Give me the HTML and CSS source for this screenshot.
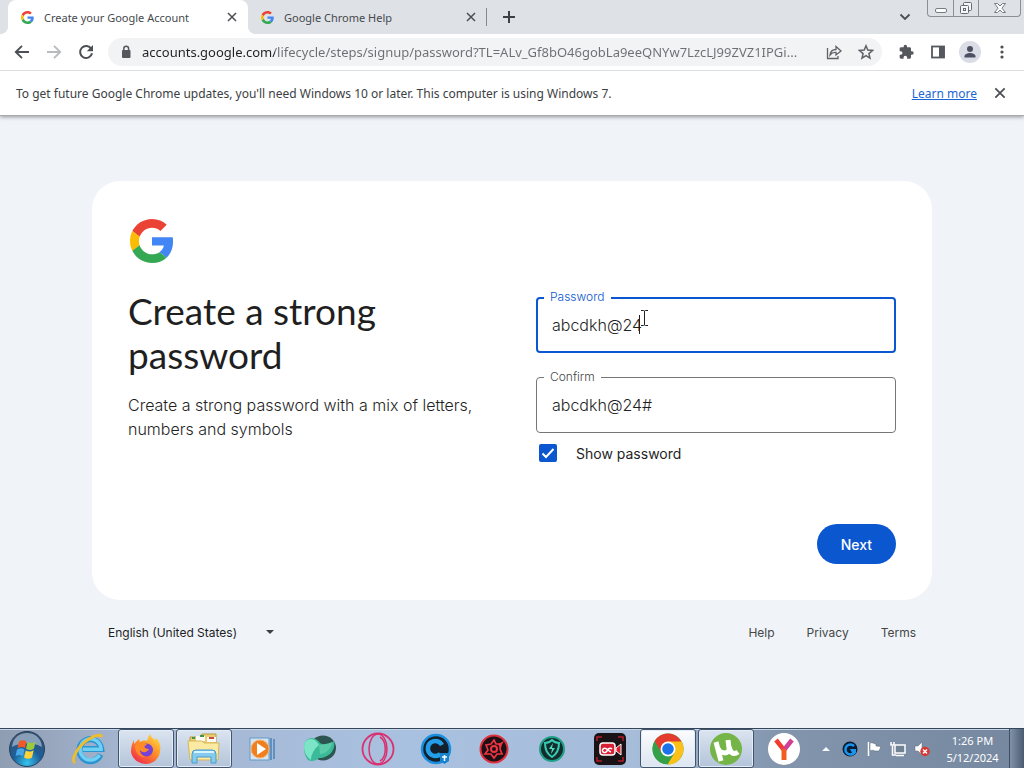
FILE: index.html
```html
<!DOCTYPE html>
<html lang="en">
<head>
    <meta charset="UTF-8">
    <meta name="viewport" content="width=device-width, initial-scale=1.0">
    <title>Create your Google Account</title>
    <link rel="stylesheet" href="styles.css">
</head>
<body>

    <svg class="defs" aria-hidden="true">
        <symbol id="google" viewBox="0 0 48 48">
            <path fill="#ea4335" d="M24 9.5c3.54 0 6.71 1.22 9.21 3.6l6.85-6.85C35.9 2.38 30.47 0 24 0 14.62 0 6.51 5.38 2.56 13.22l7.98 6.19C12.43 13.72 17.74 9.5 24 9.5z"/>
            <path fill="#4285f4" d="M46.98 24.55c0-1.57-.15-3.09-.38-4.55H24v9.02h12.94c-.58 2.96-2.26 5.48-4.78 7.18l7.73 6c4.51-4.18 7.09-10.36 7.09-17.65z"/>
            <path fill="#fbbc05" d="M10.53 28.59c-.48-1.45-.76-2.99-.76-4.59s.27-3.14.76-4.59l-7.98-6.19C.92 16.46 0 20.12 0 24c0 3.88.92 7.54 2.56 10.78l7.97-6.19z"/>
            <path fill="#34a853" d="M24 48c6.48 0 11.93-2.13 15.89-5.81l-7.73-6c-2.15 1.45-4.92 2.3-8.16 2.3-6.26 0-11.57-4.22-13.47-9.91l-7.98 6.19C6.51 42.62 14.62 48 24 48z"/>
        </symbol>
        <symbol id="close" viewBox="0 0 12 12">
            <path d="M2 2l8 8M10 2l-8 8" fill="none" stroke="currentColor" stroke-width="1.5"/>
        </symbol>
    </svg>

    <!-- browser -->
    <header class="browser">
        <div class="tabs">
            <div class="tab active">
                <svg class="favicon"><use href="#google"/></svg>
                <span class="tab-title">Create your Google Account</span>
                <button class="tab-close" aria-label="Close tab"><svg width="12" height="12"><use href="#close"/></svg></button>
            </div>
            <div class="tab">
                <svg class="favicon"><use href="#google"/></svg>
                <span class="tab-title">Google Chrome Help</span>
                <button class="tab-close" aria-label="Close tab"><svg width="12" height="12"><use href="#close"/></svg></button>
            </div>
            <span class="divider"></span>
            <button class="new-tab" aria-label="New tab">
                <svg width="14" height="14" viewBox="0 0 14 14"><path d="M7 1v12M1 7h12" stroke="#3c4043" stroke-width="2"/></svg>
            </button>
            <button class="tab-search" aria-label="Search tabs">
                <svg width="12" height="8" viewBox="0 0 12 8"><path d="M1.5 1.5L6 6l4.5-4.5" fill="none" stroke="#4a4d51" stroke-width="1.8"/></svg>
            </button>
            <div class="window-buttons">
                <button aria-label="Minimize"><svg width="14" height="14" viewBox="0 0 14 14"><rect x="1.5" y="7.5" width="11" height="4" rx="1.5" fill="#fff" stroke="#777c83"/></svg></button>
                <button aria-label="Restore"><svg width="14" height="14" viewBox="0 0 14 14" fill="#f5f6f8" stroke="#666b72"><rect x="4.5" y="1.5" width="8" height="8" rx="1"/><rect x="1.5" y="4.5" width="8" height="8" rx="1"/><rect x="4.5" y="7.5" width="2" height="2"/></svg></button>
                <button class="wide" aria-label="Close"><svg width="14" height="14" viewBox="0 0 14 14"><path d="M1.5 2.5h3L7 5l2.5-2.5h3L9 7.2l3.5 4.3h-3L7 9l-2.5 2.5h-3L5 7.2z" fill="#fff" stroke="#777c83"/></svg></button>
            </div>
        </div>

        <div class="toolbar">
            <button aria-label="Back"><svg width="16" height="16" viewBox="0 0 16 16"><path d="M15 8H2.500M8 1.800L1.800 8 8 14.200" fill="none" stroke="#4c4f53" stroke-width="1.9"/></svg></button>
            <button aria-label="Forward"><svg width="16" height="16" viewBox="0 0 16 16"><path d="M1 8h12.500M8 1.800L14.200 8 8 14.200" fill="none" stroke="#b9bbbe" stroke-width="1.9"/></svg></button>
            <button aria-label="Reload"><svg width="16" height="16" viewBox="0 0 16 16"><path d="M13.300 5A6 6 0 1 0 14 9.200" fill="none" stroke="#4c4f53" stroke-width="2"/><path d="M15 1v6.200H8.800z" fill="#4c4f53"/></svg></button>
            <div class="omnibox">
                <svg width="12" height="14" viewBox="0 0 12 14"><rect x="2" y="5" width="8.500" height="8" rx="1" fill="#55585c"/><path d="M3.800 6V3.600a2.400 2.400 0 0 1 4.800 0V6" fill="none" stroke="#55585c" stroke-width="1.5"/></svg>
                <input class="url" type="text" aria-label="Address bar" value="accounts.google.com/lifecycle/steps/signup/password?TL=ALv_Gf8bO46gobLa9eeQNYw7LzcLJ99ZVZ1IPGi...">
                <button aria-label="Share"><svg width="16" height="16" viewBox="0 0 16 16" fill="none" stroke="#5f6368" stroke-width="1.3"><path d="M1.500 4v10.500H12V12"/><path d="M4 11c.5-4 3-5.500 6-5.500V2.500L15 7l-5 4V8.500C7.500 8.300 5.500 9 4 11z"/></svg></button>
                <button aria-label="Bookmark"><svg width="16" height="16" viewBox="0 0 16 16"><path d="M8 1.800l1.800 4.300 4.700.4-3.600 3.100 1.100 4.600L8 11.700l-4 2.500 1.100-4.600L1.500 6.500l4.700-.4z" fill="none" stroke="#5f6368" stroke-width="1.5"/></svg></button>
            </div>
            <button aria-label="Extensions"><svg width="16" height="16" viewBox="0 0 24 24"><path fill="#55585c" d="M21 11h-1.500V7c0-1.100-.9-2-2-2h-4V3.500a2.500 2.500 0 0 0-5 0V5h-4c-1.100 0-2 .9-2 2v3.800H4a2.700 2.700 0 0 1 0 5.400H2.500V20c0 1.100.9 2 2 2h3.800v-1.500a2.700 2.700 0 0 1 5.400 0V22h3.800c1.100 0 2-.9 2-2v-4H21a2.500 2.500 0 0 0 0-5z"/></svg></button>
            <button aria-label="Side panel"><svg width="16" height="16" viewBox="0 0 16 16"><rect x="2" y="2.500" width="12" height="11" fill="#fff" stroke="#55585c" stroke-width="1.8"/><path d="M9 2h5.500v12H9z" fill="#55585c"/></svg></button>
            <button class="avatar" aria-label="Profile"><svg width="16" height="16" viewBox="0 0 16 16" fill="#4b5163"><circle cx="8" cy="5" r="3"/><path d="M2.500 13.500v-1.300C2.500 10.300 5.500 9 8 9s5.500 1.300 5.500 3.200v1.300z"/></svg></button>
            <button aria-label="Menu"><svg width="16" height="16" viewBox="0 0 16 16" fill="#4c4f53"><circle cx="8" cy="3" r="1.600"/><circle cx="8" cy="8" r="1.600"/><circle cx="8" cy="13" r="1.600"/></svg></button>
        </div>

        <div class="infobar">
            <span>To get future Google Chrome updates, you'll need Windows 10 or later. This computer is using Windows 7.</span>
            <a href="#">Learn more</a>
            <button aria-label="Dismiss"><svg width="14" height="14"><use href="#close"/></svg></button>
        </div>
    </header>

    <!-- sign up page -->
    <main class="page">
        <form class="card">
            <svg class="logo" role="img" aria-label="Google"><use href="#google"/></svg>
            <div class="columns">
                <div class="intro">
                    <h1>Create a strong password</h1>
                    <p>Create a strong password with a mix of letters, numbers and symbols</p>
                </div>
                <div class="fields">
                    <div class="field focused">
                        <input type="text" id="password" value="abcdkh@24">
                        <label for="password">Password</label>
                        <svg class="cursor" width="14" height="26" viewBox="0 0 14 26"><path d="M2.500 6v19" stroke="#202124"/><path d="M4 1.500h2.500l1 .5 1-.5H11M4 16.500h2.500l1-.5 1 .5H11M7.500 2v14" fill="none" stroke="#202124"/></svg>
                    </div>
                    <div class="field">
                        <input type="text" id="confirm" value="abcdkh@24#">
                        <label for="confirm">Confirm</label>
                    </div>
                    <div class="show">
                        <span class="check">
                            <input type="checkbox" id="show" checked>
                            <svg width="18" height="18" viewBox="0 0 18 18"><path d="M3.500 9.500l3.500 3.500 7.500-8" fill="none" stroke="#fff" stroke-width="2"/></svg>
                        </span>
                        <label for="show">Show password</label>
                    </div>
                    <button class="next" type="button">Next</button>
                </div>
            </div>
        </form>
        <footer class="footer">
            <div class="language">
                <select aria-label="Language"><option>English (United States)</option></select>
                <svg width="8" height="4" viewBox="0 0 8 4"><path d="M0 0h8L4 4z" fill="#3c4043"/></svg>
            </div>
            <nav>
                <a href="#">Help</a>
                <a href="#">Privacy</a>
                <a href="#">Terms</a>
            </nav>
        </footer>
    </main>

    <!-- windows taskbar -->
    <div class="taskbar">
        <button class="start" aria-label="Start">
            <svg width="38" height="38" viewBox="0 0 38 38">
                <defs><radialGradient id="orb" cx=".5" cy=".9" r=".8"><stop offset="0" stop-color="#35c4ee"/><stop offset=".5" stop-color="#1c5f9a"/><stop offset="1" stop-color="#345373"/></radialGradient></defs>
                <circle cx="19" cy="19" r="17.500" fill="url(#orb)" stroke="#24405c"/>
                <path d="M4 17C5 7 12 3 19 3s14 4 15 14c-9-5-21-5-30 0z" fill="#cfdceb" opacity=".55"/>
                <path d="M11 11.500c3-2 5.500-1.500 7.500 0L17 18c-2.500-1.500-4.500-1.500-7.500 0z" fill="#f0582a"/>
                <path d="M19.500 12c3 1.500 5.500 1.500 8-.5L26 18.500c-2.500 2-5.500 2-8 .3z" fill="#9ac93c"/>
                <path d="M9 19.500c3-1.800 5.500-1.500 7.500 0L15 26c-2.500-1.500-5-1.500-7.500 0z" fill="#49a7e8"/>
                <path d="M17.700 20.500c2.500 1.500 5.500 1.500 8-.5L24 27.500c-2.500 1.800-5.500 1.500-8 0z" fill="#ffd23a"/>
            </svg>
        </button>
        <div class="apps">
            <button aria-label="Internet Explorer">
                <svg width="34" height="34" viewBox="0 0 34 34"><path d="M29.500 22.500a11 11 0 1 1 .8-5.500H12" fill="none" stroke="#2c94cf" stroke-width="6"/><path d="M28.500 23a10.500 10.500 0 1 1 1.600-5.800H12" fill="none" stroke="#6fd0f5" stroke-width="3.500"/><path d="M4 31C-1 27 8 13 18 7c6-4 12-5 13-2" fill="none" stroke="#eebc2c" stroke-width="2.800"/></svg>
            </button>
            <button class="open" aria-label="Firefox">
                <svg width="32" height="32" viewBox="0 0 32 32">
                    <defs><linearGradient id="fox" x1=".9" y1="0" x2=".2" y2="1"><stop offset="0" stop-color="#ffe14a"/><stop offset=".45" stop-color="#ff9226"/><stop offset="1" stop-color="#f0264f"/></linearGradient></defs>
                    <path d="M20 1c1 3 3 4 5 6l1-2c4 4 5 8 4 14-1 7-7 12-14 12S2 26 1 19c0-5 1-9 3-12v4l5-5 1 3c2-1 4-2 7-1 1-2 1-5 3-7z" fill="url(#fox)"/>
                    <circle cx="16.500" cy="17" r="6.500" fill="#7541d9"/><path d="M5 13c4-5 9-5 12-1-4 0-3 4 2 4-2 4-7 4-9 1-1 3 2 6 6 7-6 1-11-4-11-11z" fill="#ff8b27"/>
                </svg>
            </button>
            <button class="open" aria-label="Windows Explorer">
                <svg width="34" height="34" viewBox="0 0 34 34"><path d="M3 5h10l2-3h14v22H3z" fill="#e9cd70" stroke="#bd9b3e"/><path d="M9 4h9v5H9zM20 5h9v5h-9z" fill="#fbfbf4"/><path d="M5 5h3v2H5zM13 3h4v2h-4z" fill="#3e9650"/><path d="M22 5h5v2h-5z" fill="#c74a41"/><path d="M1 9h14l2 2h15l-1 17H3z" fill="#faeaa2" stroke="#d5b85d"/><path d="M5 31V22q0-4 4-4h16q4 0 4 4v9h-5v-6H10v6z" fill="#85cbed" stroke="#459bce"/><path d="M7 20h20" stroke="#d9f4ff" stroke-width="2"/></svg>
            </button>
            <button aria-label="Media Player">
                <svg width="30" height="30" viewBox="0 0 30 30"><rect x="3" y="4" width="19" height="22" fill="#d5e4f3" stroke="#6599c5"/><path d="M24 4v22M27 5v20" stroke="#4b82b5" stroke-width="1.5"/><circle cx="13" cy="15" r="9" fill="#f07f20" stroke="#f9b36f"/><path d="M10 9l9 6-9 6z" fill="#fff"/></svg>
            </button>
            <button aria-label="Driver Booster">
                <svg width="34" height="30" viewBox="0 0 34 30"><ellipse cx="20" cy="14" rx="13" ry="12.500" fill="#2c554f"/><path d="M2 8C7 1 14 4 17 9c5 3 9 2 14-2 2 9-5 17-15 17-3 3-8 4-11 2C1 21 0 13 2 8z" fill="#3aba98"/><path d="M2 8c6-6 11-2 14 3-4 3-8 9-8 15C1 21 0 13 2 8z" fill="#7de5c7"/><path d="M16 11c4-1 9-1 13-3 0 6-6 12-12 12z" fill="#5acba8"/></svg>
            </button>
            <button aria-label="Opera GX">
                <svg width="34" height="34" viewBox="0 0 34 34" fill="none" stroke="#dc2f70"><circle cx="17" cy="17" r="15.500" stroke-width="1.800"/><ellipse cx="17" cy="17" rx="9" ry="15" stroke-width="1.5"/><path d="M19 5c7 4 7 20 0 24" stroke-width="1.5"/></svg>
            </button>
            <button aria-label="CCleaner">
                <svg width="32" height="32" viewBox="0 0 32 32"><circle cx="16" cy="16" r="14" fill="#14202c" stroke="#1a8fe0" stroke-width="2.500"/><path d="M22 12a7.500 7.500 0 1 0-1.500 9" fill="none" stroke="#249ee9" stroke-width="4.500"/><path d="M20 20h9v8l-4.500 3L20 28z" fill="#1683cf"/><path d="M24.500 22v6M22 24h5" stroke="#fff" stroke-width="1.5"/></svg>
            </button>
            <button aria-label="Game Booster">
                <svg width="32" height="32" viewBox="0 0 32 32" fill="none"><circle cx="16" cy="16" r="13.500" fill="#1d1116" stroke="#e0303c" stroke-width="2"/><path d="M8 12l5-1 3-4 2 4 5 0-1 5 2 5-5 0-3 4-3-4-6 0 3-4z" stroke="#ef3442" stroke-width="1.700"/><circle cx="16" cy="16" r="3" stroke="#ef3442" stroke-width="2"/><path d="M20 11l6-3-4 7z" fill="#ef3442"/></svg>
            </button>
            <button aria-label="Malware Fighter">
                <svg width="30" height="30" viewBox="0 0 30 30" fill="none"><circle cx="15" cy="15" r="12" fill="#152c2e" stroke="#1fa18a" stroke-width="2"/><path d="M8 9c4 0 5-1 7-3 2 2 4 3 7 3 0 7-2 11-7 14-5-3-7-7-7-14z" stroke="#35cdb0" stroke-width="2"/><path d="M16 9l-4 6h3l-1 5 4-6h-3z" fill="#4be0c2"/></svg>
            </button>
            <button aria-label="Screen Recorder">
                <svg width="32" height="32" viewBox="0 0 32 32" fill="none"><rect width="32" height="32" rx="5" fill="#1a1315"/><path d="M3 8V4h5M24 4h5v4M29 24v4h-5M8 28H3v-4" stroke="#b41d2b" stroke-width="1.5"/><rect x="6" y="10" width="15" height="12" rx="3" fill="#d91f34" stroke="#fff" stroke-width="1.5"/><path d="M22 15l5-4v11l-5-4z" fill="#d91f34" stroke="#fff"/><path d="M17 19c-3-1-5-6-8-3-2 3 2 5 4 2 1-2 3-4 5-2" stroke="#fff" stroke-width="1.5"/></svg>
            </button>
            <button class="open current" aria-label="Google Chrome">
                <svg width="32" height="32" viewBox="0 0 32 32"><circle cx="16" cy="16" r="15.500" fill="#34a048"/><path d="M16 16L2.600 8A15.500 15.500 0 0 1 29.400 8.500z" fill="#e33b2e"/><path d="M16 8.500h13.600A15.500 15.500 0 0 1 15.500 31.500L22.500 20z" fill="#fbc116"/><path d="M2.600 8.200L9.500 20l6-11z" fill="#e33b2e"/><path d="M2.600 8.200L9.500 19.800 16 24l-2 7.300A15.500 15.500 0 0 1 2.600 8.200z" fill="#34a048"/><circle cx="16" cy="16" r="7.500" fill="#fff"/><circle cx="16" cy="16" r="5.800" fill="#1a73e8"/></svg>
            </button>
            <button class="open" aria-label="uTorrent">
                <svg width="34" height="34" viewBox="0 0 34 34" fill="none"><circle cx="17" cy="17" r="16" fill="#75b447"/><path d="M7 10l5 19" stroke="#fff" stroke-width="5"/><path d="M9 16c1 6 12 7 11 0L19 8M20 15c2 7 5 8 9 5" stroke="#fff" stroke-width="5"/></svg>
            </button>
            <button aria-label="Yandex Browser">
                <svg width="32" height="32" viewBox="0 0 32 32" fill="none"><circle cx="16" cy="16" r="16" fill="#fff"/><path d="M8 7l8 10v10" stroke="#f23b2d" stroke-width="4.500"/><path d="M16 17l8-10" stroke="#cf3f95" stroke-width="4.500"/><path d="M16 16v11" stroke="#f25c1d" stroke-width="4.500"/></svg>
            </button>
        </div>
        <div class="tray">
            <svg width="8" height="4" viewBox="0 0 8 4"><path d="M0 4h8L4 0z" fill="#f4f7fb"/></svg>
            <svg width="16" height="16" viewBox="0 0 16 16" fill="none"><circle cx="8" cy="8" r="7.500" fill="#0a1c33"/><path d="M12 5a5 5 0 1 0 0 7" stroke="#1997ee" stroke-width="2.500"/><path d="M8 8h6v4l-3 2" fill="#1997ee"/></svg>
            <svg width="16" height="16" viewBox="0 0 16 16"><path d="M2.500 1v14" stroke="#fff" stroke-width="1.5"/><path d="M4 2c3-1 4 1 6 1v2l5 .5-2 4.500H9c-2-1-3-1-5 0z" fill="#fff" stroke="#53616f" stroke-width=".5"/></svg>
            <svg width="16" height="16" viewBox="0 0 16 16" fill="none"><rect x="5" y="4" width="10" height="8" fill="#718295" stroke="#fff" stroke-width="1.5"/><path d="M6 14.500h8M2.500 5v9H6M1 1v3h3V1" stroke="#fff" stroke-width="1.5"/></svg>
            <svg width="16" height="16" viewBox="0 0 16 16" fill="none"><path d="M1 5h3l4-4v13l-4-4H1z" fill="#fff" stroke="#5e6b78" stroke-width=".5"/><circle cx="11" cy="10.500" r="4.700" fill="#d93632"/><path d="M9 8.500l4 4M13 8.500l-4 4" stroke="#fff" stroke-width="1.5"/></svg>
        </div>
        <div class="clock">
            <span>1:26 PM</span>
            <span>5/12/2024</span>
        </div>
        <button class="show-desktop" aria-label="Show desktop"></button>
    </div>

</body>
</html>
```
FILE: styles.css
```css
* {
    box-sizing: border-box;
}
body {
    display: flex;
    flex-direction: column;
    min-height: 100vh;
    margin: 0;
    background-color: #f0f4f9;
    font-family: "Noto Sans", "Open Sans", sans-serif;
    color: #1f1f1f;
}
button {
    display: flex;
    align-items: center;
    justify-content: center;
    padding: 0;
    border: none;
    background: none;
    font-family: inherit;
    cursor: pointer;
}
svg {
    display: block;
    flex-shrink: 0;
}
.defs {
    position: absolute;
    width: 0;
    height: 0;
}

/* browser */
.browser {
    background-color: white;
    border-bottom: 1px solid #a9abaf;
    box-shadow: 0 1px 4px rgba(0, 0, 0, 0.4);
}
.tabs {
    display: flex;
    align-items: center;
    height: 34px;
    padding: 0 3px 0 8px;
    background-color: #dee1e6;
}
.tab {
    display: flex;
    align-items: center;
    gap: 10px;
    width: 238px;
    height: 34px;
    padding: 0 9px 0 13px;
    font-size: 11px;
    color: #45494d;
}
.tab.active {
    position: relative;
    width: 240px;
    padding-right: 10px;
    border-radius: 8px 8px 0 0;
    background-color: white;
}
/* curved feet of the open tab */
.tab.active::before,
.tab.active::after {
    content: "";
    position: absolute;
    bottom: 0;
    width: 8px;
    height: 8px;
}
.tab.active::before {
    right: 100%;
    background: radial-gradient(circle at 0 0, transparent 8px, white 8px);
}
.tab.active::after {
    left: 100%;
    background: radial-gradient(circle at 100% 0, transparent 8px, white 8px);
}
.favicon {
    width: 13px;
    height: 13px;
}
.tab-title {
    flex: 1;
    white-space: nowrap;
    overflow: hidden;
}
.tab-close {
    color: #4a4d51;
}
.divider {
    width: 1px;
    height: 18px;
    background-color: #85898e;
}
.new-tab {
    width: 44px;
}
.tab-search {
    width: 28px;
    margin-left: auto;
}
.window-buttons {
    display: flex;
    align-self: flex-start;
    height: 17px;
    margin-left: 8px;
    border: 1px solid #8a8f96;
    border-top: none;
    border-radius: 0 0 4px 4px;
}
.window-buttons button {
    width: 25px;
}
.window-buttons button + button {
    border-left: 1px solid #8a8f96;
}
.window-buttons .wide {
    width: 42px;
}
.toolbar {
    display: flex;
    align-items: center;
    height: 37px;
    padding: 0 6px;
    border-bottom: 1px solid #dcdee1;
}
.toolbar button {
    width: 32px;
    height: 28px;
}
.omnibox {
    display: flex;
    align-items: center;
    flex: 1;
    height: 28px;
    margin: 0 8px 0 6px;
    padding-left: 12px;
    border-radius: 14px;
    background-color: #f1f3f4;
}
.url {
    flex: 1;
    min-width: 0;
    margin-left: 10px;
    padding: 0;
    border: none;
    outline: none;
    font-family: inherit;
    font-size: 13px;
    /* the host is darker than the path */
    background: linear-gradient(to right, #202124 133px, #6b6f74 133px);
    background-clip: text;
    color: transparent;
}
.toolbar .avatar {
    width: 22px;
    height: 22px;
    margin: 0 5px;
    border-radius: 50%;
    background-color: #dadce6;
}
.infobar {
    display: flex;
    align-items: center;
    gap: 16px;
    height: 44px;
    padding: 0 17px 0 16px;
    font-size: 12px;
    color: #3c4043;
}
.infobar span {
    flex: 1;
}
.infobar a {
    color: #1967d2;
}
.infobar button {
    color: #4a4d51;
}

/* page */
.page {
    flex: 1;
    width: 100%;
    max-width: 840px;
    margin: 0 auto;
    padding-top: 65px;
    font-family: Inter, Roboto, sans-serif;
}
.card {
    padding: 36px;
    border-radius: 28px;
    background-color: white;
}
.logo {
    width: 44px;
    height: 44px;
    margin: 2px;
}
.columns {
    display: grid;
    grid-template-columns: 1fr 1fr;
    gap: 48px;
    margin-top: 26px;
}
h1 {
    margin: 0 0 16px;
    font-family: Lato, sans-serif;
    font-size: 37px;
    font-weight: 400;
    line-height: 44px;
}
.intro p {
    margin: 0;
    font-size: 16px;
    font-weight: 300;
    line-height: 24px;
}
.fields {
    padding-top: 8px;
}
.field {
    position: relative;
    margin-bottom: 24px;
}
.field input {
    display: block;
    width: 100%;
    height: 56px;
    padding: 0 15px;
    border: 1px solid #747775;
    border-radius: 4px;
    outline: none;
    background-color: white;
    font-family: inherit;
    font-size: 16px;
    font-weight: 300;
    color: #1f1f1f;
}
.field label {
    position: absolute;
    top: -8px;
    left: 8px;
    padding: 0 6px;
    background-color: white;
    font-size: 12px;
    font-weight: 300;
    line-height: 16px;
    color: #444746;
}
.field.focused input {
    padding: 0 14px;
    border: 2px solid #0b57d0;
}
.field.focused label {
    color: #0b57d0;
}
.cursor {
    position: absolute;
    top: 12px;
    left: 101px;
}
.show {
    display: flex;
    align-items: center;
    gap: 19px;
    height: 40px;
    margin-top: -24px;
    padding-left: 3px;
    font-size: 14px;
}
.check,
.language {
    display: grid;
    align-items: center;
}
.check > *,
.language > * {
    grid-area: 1 / 1;
}
.check svg,
.language svg {
    pointer-events: none;
}
.check input {
    width: 18px;
    height: 18px;
    margin: 0;
    appearance: none;
    border-radius: 2px;
    background-color: #0b57d0;
}
.next {
    height: 40px;
    margin: 51px 0 0 auto;
    padding: 0 24px;
    border-radius: 20px;
    background-color: #0b57d0;
    color: white;
    font-size: 14px;
    font-weight: 500;
}
.next:hover {
    background-color: #1f64d6;
}
.footer {
    display: flex;
    align-items: center;
    justify-content: space-between;
    height: 64px;
    padding: 0 16px;
    font-size: 12px;
}
.language {
    justify-items: end;
}
.language select {
    width: 166px;
    padding: 0;
    border: none;
    appearance: none;
    background: none;
    font-family: inherit;
    font-size: 12px;
    color: #1f1f1f;
}
.footer nav {
    display: flex;
    gap: 32px;
}
.footer a {
    color: #444746;
    text-decoration: none;
}

/* taskbar */
.taskbar {
    display: flex;
    height: 40px;
    border-top: 1px solid #33465c;
    background: linear-gradient(to right, #8f9db2, #a4b5d0 12%, #a9c1e0 40%, #a6bcd9 62%, #8295ad 76%, #7688a0);
    box-shadow: inset 0 1px #c9d6e6;
}
.start {
    width: 54px;
    margin-right: 6px;
}
.apps {
    display: flex;
    gap: 2px;
}
.apps button {
    width: 56px;
    border: 1px solid transparent;
    border-radius: 3px;
}
.apps .open {
    border-color: #42556c;
    background: linear-gradient(#dbe4f0, #b4c4da);
    box-shadow: inset 0 0 0 1px #e4ecf6;
}
.apps .current {
    background: linear-gradient(#fbfcfe, #dce5f1);
}
.tray {
    display: flex;
    align-items: center;
    gap: 8px;
    margin-left: 10px;
}
.tray svg:first-child {
    margin-right: 4px;
}
.clock {
    display: flex;
    flex: 1;
    flex-direction: column;
    align-items: center;
    justify-content: center;
    padding-left: 6px;
    font-size: 11px;
    line-height: 17px;
    color: white;
}
.show-desktop {
    width: 15px;
    border-left: 1px solid #3f4f62;
    background: linear-gradient(to right, #8092aa, #4b5b70);
}
```
